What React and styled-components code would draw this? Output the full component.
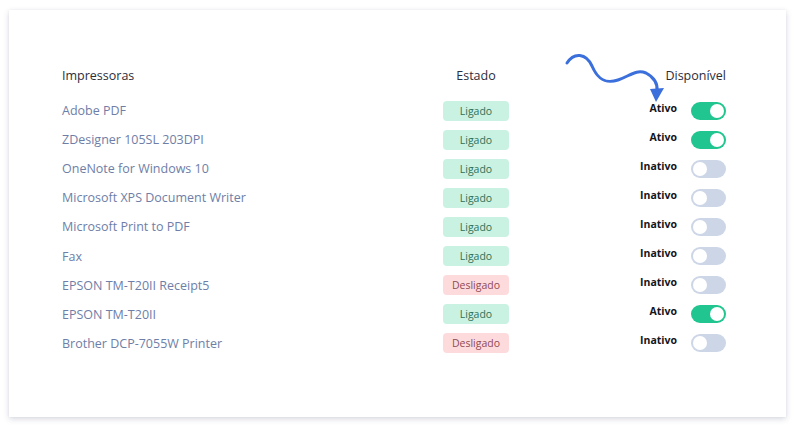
import React from 'react'
import styled, { createGlobalStyle } from 'styled-components'

const GlobalStyle = createGlobalStyle`
  body {
    margin: 0;
    background: #fff;
    font-family: "Open Sans", "Liberation Sans", sans-serif;
  }
`

const Page = styled.div`
  width: 800px;
  height: 432px;
  padding: 10px 14px 15px 9px;
  box-sizing: border-box;
  background: #fff;
`

const Card = styled.div`
  position: relative;
  height: 100%;
  box-sizing: border-box;
  background: #fff;
  box-shadow: 0 2px 6px rgba(40, 50, 90, 0.18), 0 0 2px rgba(40, 50, 90, 0.06);
  padding: 51px 60px 0 53px;
`

const Table = styled.div`
  display: grid;
  grid-template-columns: 339px 150px 1fr;
`

const HeadCell = styled.div`
  height: 29px;
  margin-bottom: 6px;
  display: flex;
  align-items: center;
  justify-content: ${p => p.align || 'flex-start'};
  font-size: 12.5px;
  font-weight: 500;
  color: #2c2d3c;
`

const Cell = styled.div`
  height: 29.1px;
  display: flex;
  align-items: center;
  justify-content: ${p => p.align || 'flex-start'};
`

const Name = styled.span`
  font-size: 12.5px;
  color: #6e7ea7;
`

const Badge = styled.span`
  width: 66px;
  height: 20px;
  border-radius: 4px;
  display: flex;
  align-items: center;
  justify-content: center;
  font-size: 10.5px;
  background: ${p => (p.on ? '#c9f2e3' : '#fddbdd')};
  color: ${p => (p.on ? '#2f7058' : '#8f4a55')};
`

const Status = styled.span`
  font-size: 10.5px;
  font-weight: 700;
  color: #15151c;
  padding-bottom: 6px;
  margin-right: 14px;
`

const Toggle = styled.span`
  position: relative;
  width: 35px;
  height: 18px;
  border-radius: 9px;
  background: ${p => (p.on ? '#21c58f' : '#cdd6e7')};

  &::after {
    content: '';
    position: absolute;
    top: 2px;
    left: ${p => (p.on ? '19px' : '2px')};
    width: 14px;
    height: 14px;
    border-radius: 50%;
    background: #fff;
  }
`

const Arrow = styled.svg`
  position: absolute;
  left: 0;
  top: 0;
  pointer-events: none;
`

const printers = [
  { name: 'Adobe PDF', on: true, active: true },
  { name: 'ZDesigner 105SL 203DPI', on: true, active: true },
  { name: 'OneNote for Windows 10', on: true, active: false },
  { name: 'Microsoft XPS Document Writer', on: true, active: false },
  { name: 'Microsoft Print to PDF', on: true, active: false },
  { name: 'Fax', on: true, active: false },
  { name: 'EPSON TM-T20II Receipt5', on: false, active: false },
  { name: 'EPSON TM-T20II', on: true, active: true },
  { name: 'Brother DCP-7055W Printer', on: false, active: false },
]

export default function App() {
  return (
    <Page>
      <GlobalStyle />
      <Card>
        <Table>
          <HeadCell>Impressoras</HeadCell>
          <HeadCell align="center">Estado</HeadCell>
          <HeadCell align="flex-end">Disponível</HeadCell>
          {printers.map(p => (
            <React.Fragment key={p.name}>
              <Cell>
                <Name>{p.name}</Name>
              </Cell>
              <Cell align="center">
                <Badge on={p.on}>{p.on ? 'Ligado' : 'Desligado'}</Badge>
              </Cell>
              <Cell align="flex-end">
                <Status>{p.active ? 'Ativo' : 'Inativo'}</Status>
                <Toggle on={p.active} />
              </Cell>
            </React.Fragment>
          ))}
        </Table>
        <Arrow width="777" height="120" viewBox="9 10 777 120">
          <path
            d="M567 63 C574 52, 586 53, 592 66 C598 80, 606 84, 618 80 C630 76, 636 69, 646 73 C654 77, 658 84, 657 91"
            fill="none"
            stroke="#3b6fdb"
            strokeWidth="3"
            strokeLinecap="round"
          />
          <polygon points="650,89 664,88 656,102" fill="#3b6fdb" />
        </Arrow>
      </Card>
    </Page>
  )
}
